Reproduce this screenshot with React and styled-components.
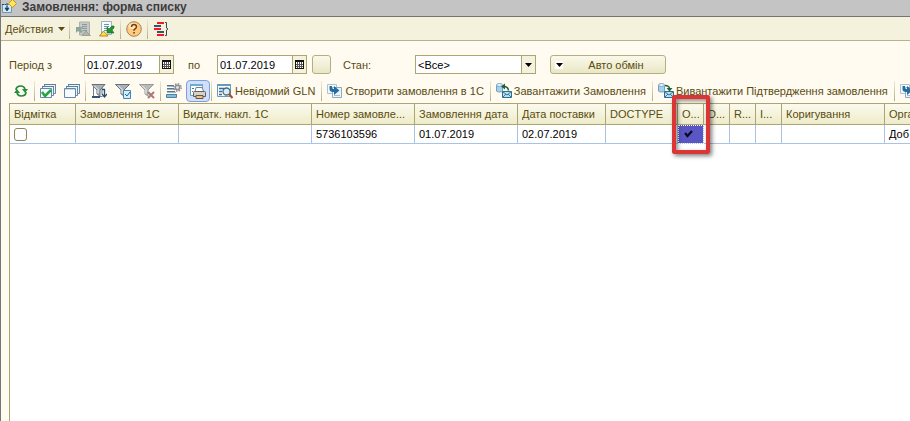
import React from "react";
import styled, { createGlobalStyle, css } from "styled-components";

const Global = createGlobalStyle`
  *, *::before, *::after { box-sizing: border-box; }
  body { margin: 0; font: 11px/16px "Liberation Sans", Arial, sans-serif; color: #5a4b10; }
  button, input, select { font: inherit; color: inherit; margin: 0; }
  svg { display: block; flex: none; }
`;

const Page = styled.div`
  display: flex;
  flex-direction: column;
  min-height: 100vh;
  overflow: hidden;
  background: #fffbf0;
  border-left: 1px solid #767676;
`;

const TitleBar = styled.header`
  display: flex;
  align-items: center;
  gap: 5px;
  height: 17px;
  padding-bottom: 3px;
  background: #c4c4c4;
  border-bottom: 1px solid #747474;
  overflow: hidden;
  white-space: nowrap;
`;

const Title = styled.h1`
  margin: 0;
  font-size: 12px;
  line-height: 16px;
  color: #3c3c3c;
`;

const MainBar = styled.nav`
  display: flex;
  align-items: center;
  height: 24px;
  padding-left: 4px;
  background: #f4f2dc;
  border-bottom: 1px solid #b9b385;
`;

const Filters = styled.section`
  display: flex;
  align-items: center;
  padding: 14px 0 0 8px;
  white-space: nowrap;
`;

const ToolRow = styled.nav`
  display: flex;
  align-items: center;
  height: 22px;
  margin-top: 6px;
  padding-left: 8px;
  white-space: nowrap;
`;

const Tool = styled.button`
  display: flex;
  flex: none;
  align-items: center;
  justify-content: center;
  gap: 2px;
  width: 24px;
  height: 22px;
  padding: 0;
  border: 1px solid transparent;
  border-radius: 4px;
  background: none;
  white-space: nowrap;
  ${(p) => p.$text && css`
    width: auto;
    padding: 0 4px 0 3px;
  `}
  ${(p) => p.$active && css`
    border-color: #7f9fdc;
    background: #cfdffc;
  `}
`;

const MenuButton = styled(Tool)`
  width: auto;
  gap: 5px;
  margin-right: 3px;
  border: 0;
`;

const Divider = styled.span`
  flex: none;
  width: 1px;
  height: 20px;
  margin: 0 1px;
  background: linear-gradient(#eeeada, #b3ae86);
`;

const Label = styled.label`
  flex: none;
  width: ${(p) => p.$w}px;
`;

const Spacer = styled.span`
  flex: none;
  width: 12px;
`;

const Field = styled.div`
  display: flex;
  flex: none;
  width: ${(p) => p.$w}px;
  height: 19px;
  margin-right: ${(p) => p.$after || 0}px;
  border: 1px solid #aca571;
  background: #fff;
  color: #000;
`;

const fieldText = css`
  flex: 1;
  min-width: 0;
  height: 17px;
  padding: 0 2px;
  border: 0;
  background: none;
  outline: none;
  appearance: none;
`;
const Input = styled.input`${fieldText}`;
const Select = styled.select`${fieldText}`;

const FieldButton = styled.button`
  display: flex;
  align-items: center;
  justify-content: center;
  width: 14px;
  padding: 0;
  border: 0;
  border-left: 1px solid #aca571;
  background: #f4f2dc;
`;

const PushButton = styled.button`
  display: flex;
  flex: none;
  align-items: center;
  width: ${(p) => p.$w}px;
  height: 19px;
  padding: 0 4px;
  border: 1px solid #b5af80;
  border-radius: 3px;
  background: linear-gradient(#fbf9ea, #e9e7c6);
`;

const PushText = styled.span`
  flex: 1;
  padding-left: 8px;
  text-align: center;
`;

const Marker = styled.span`
  display: flex;
  align-items: center;
  justify-content: center;
  width: 8px;
  height: 8px;
  background: #fff;
`;

const Grid = styled.main`
  flex: 1;
  margin: 1px 0 0 8px;
  border: solid #aca571;
  border-width: 1px 0 0 1px;
  background: #fff;
`;

const Table = styled.table`
  width: 100%;
  table-layout: fixed;
  border-collapse: separate;
  border-spacing: 0;
`;

const Col = styled.col`
  width: ${(p) => (p.$w ? `${p.$w}px` : "auto")};
`;

const Th = styled.th`
  position: relative;
  height: 21px;
  padding: 0 0 0 4px;
  border: solid #aca571;
  border-width: 0 1px 1px 0;
  background: linear-gradient(#fbfaee, #eeecc9);
  font-weight: normal;
  text-align: left;
  &:last-child { border-right: 0; }
`;

const Td = styled.td`
  height: 19px;
  padding: 0 0 0 4px;
  border: solid #a9c3e6;
  border-width: 0 1px 1px 0;
  color: #000;
  overflow: hidden;
  white-space: nowrap;
  &:last-child { border-right: 0; }
`;

const Chosen = styled(Td)`
  padding: 0 0 0 6px;
  background: #5a57c4;
  outline: 1px dotted #fff;
  outline-offset: -1px;
`;

const HeadText = styled.span`
  display: block;
  overflow: hidden;
  white-space: nowrap;
`;

const Check = styled.input`
  appearance: none;
  display: block;
  width: 13px;
  height: 13px;
  margin: 0;
  border: 1px solid #8d8558;
  border-radius: 3px;
  background: #fff;
`;

const Highlight = styled.span`
  position: absolute;
  z-index: 2;
  top: -9px;
  left: -6px;
  width: 38px;
  height: 59px;
  border: 4px solid #dc3535;
  border-radius: 2px;
  box-shadow: 2px 2px 4px rgba(0, 0, 0, 0.5), inset 2px 2px 4px rgba(0, 0, 0, 0.45);
  pointer-events: none;
`;

const Svg = ({ children }) => (
  <svg width="16" height="16" viewBox="0 0 16 16" fill="none" aria-hidden="true">{children}</svg>
);

const Arrow = ({ color = "#000" }) => (
  <svg width="7" height="4" viewBox="0 0 7 4" aria-hidden="true"><path d="M0 0h7L3.500 4z" fill={color} /></svg>
);

const ListIcon = () => (
  <Svg>
    <path d="M1.500 5.500h9v8h-9z" fill="#d5e7f3" stroke="#6a9abb" />
    <path d="M1 5.500h4M6 4v4" stroke="#234e70" strokeDasharray="2 1" />
    <path d="M6 6v3M4 9h4l-2 3z" fill="#16405f" stroke="#16405f" strokeWidth=".8" />
    <path d="M11.500 .5 15.500 4.500l-4 4-4-4z" fill="#ffe45c" stroke="#c69a18" />
  </Svg>
);

const Import = ({ off }) => (
  <Svg>
    <path d={off ? "M4.500 1h10v13h-10z" : "M2.500 .5h10v13h-10z"} fill={off ? "#c5c9c8" : "#f8fbfd"} stroke={off ? "#aab1b1" : "#96b3c8"} />
    <path d={off ? "M7 3.500h5M7 5.500h5M7 7.500h5M8 9.500h4" : "M5 3.500h5M5 5.500h5M5 7.500h4M5 9.500h3"} stroke={off ? "#8c999a" : "#6c93b1"} />
    {off ? (
      <><path d="M1 6h7L6 8l2 3-2 1-3-2-2 2z" fill="#8ba79b" /><path d="m7 14.500 4-4.500 4.500 4.500z" fill="#b5b3a8" stroke="#a19f97" /></>
    ) : (
      <><path d="M15 5v2l-2 2 2 3H8V6l2 2 3-3z" fill="#23952c" stroke="#0d6c18" strokeWidth=".6" /><path d="m.5 15 4-5 4.500 5z" fill="#ffdb54" stroke="#b98b17" /></>
    )}
  </Svg>
);

const Help = () => (
  <Svg>
    <circle cx="8" cy="8" r="7.300" fill="#ffca7d" stroke="#a98158" />
    <ellipse cx="7" cy="5" rx="4.500" ry="3" fill="#ffe7b9" />
    <path d="M5.500 6q0-2.500 2.500-2.500T10.500 6Q10.500 7 8 8.800v1" stroke="#763f1c" strokeWidth="1.500" />
    <path d="M7.200 11h1.600v1.600H7.200z" fill="#763f1c" />
  </Svg>
);

const Structure = () => (
  <Svg>
    <path d="M4 2h7M1 8h7M4 14h7" stroke="#ed1c24" strokeWidth="2" />
    <path d="M1 5h7M4 11h7" stroke="#31566f" strokeWidth="2" />
    <path d="M12 1.500h1.500V7L15 8l-1.500 1v5.500H12" stroke="#34495c" />
  </Svg>
);

const Refresh = () => (
  <Svg>
    <path d="M3 7q0-4 5-4 3 0 4 3M13 9q0 4-5 4-3 0-4-3" stroke="#238a35" strokeWidth="1.700" />
    <path d="M9 6h6l-3 4zM1 10l3-4 3 4z" fill="#23903a" />
  </Svg>
);

const Windows = ({ checked }) => (
  <Svg>
    <path d="M4.500 1.500h11v9h-11z" fill="#edf4f9" stroke="#6589a5" />
    <path d="M4 1.500h12" stroke="#55809f" />
    <path d="M2.500 3.500h11v9h-11z" fill="#edf4f9" stroke="#6589a5" />
    <path d="M2 3.500h12" stroke="#55809f" />
    <path d="M.5 5.500h11v9H.5z" fill="#f7fbff" stroke="#6589a5" />
    {checked ? <path d="m2 9 3 4 6-6" stroke="#25a53b" strokeWidth="2.500" /> : <path d="M1 6.500h10" stroke="#c5d9e6" />}
  </Svg>
);

const Funnel = ({ kind }) => (
  <Svg>
    {kind === "set" && <path d="M2.500 2v11.500h9M11 3v8" fill="#fff" stroke="#66839a" />}
    <path d={kind === "set" ? "M1 1.500h13L9 7v6l-3-2V7z" : "M.5 1.500h14L9 7v6l-3-2V7z"} fill={kind === "off" ? "#b9b9b6" : "#aab2b8"} stroke={kind === "off" ? "#999" : "#66717b"} />
    <path d="m3 2.500 4 4v4" stroke="#f4f6f7" />
    {kind === "set" && <><path d="M11 6.500h3M13.500 6v8M11 11l2.500 3 2.500-3" stroke="#294c69" strokeWidth="1.300" /><path d="M1 14h8" stroke="#305673" strokeWidth="2" /></>}
    {kind === "value" && <><path d="M8.500 7.500h7v8h-7z" fill="#d7ecfa" stroke="#4388b3" /><path d="m10 11 2 2 3-4" stroke="#17679a" /></>}
    {kind === "off" && <path d="m9 9 6 6m0-6-6 6" stroke="#a67a78" strokeWidth="2" />}
  </Svg>
);

const Settings = () => (
  <Svg>
    <path d="M1 2.500h7M1 5.500h7M1 8.500h8M1 11.500h10" stroke="#557890" />
    <path d="M1 3.500h7M1 6.500h7M1 9.500h9" stroke="#9fb9c9" />
    <path d="M.5 11.500h10v3H.5z" fill="#83bcde" stroke="#54809f" />
    <circle cx="11.500" cy="4.500" r="3.600" stroke="#909191" strokeWidth="1.600" strokeDasharray="1.500 1.300" />
    <circle cx="11.500" cy="4.500" r="2.200" fill="#e7e7e7" stroke="#8d8d91" strokeWidth="1.500" />
  </Svg>
);

const Printer = () => (
  <Svg>
    <path d="M.5 1.500h12v11H.5z" fill="#fff" stroke="#6d9fc2" />
    <path d="M0 2h13" stroke="#6daad4" strokeWidth="2" />
    <path d="M2 5.500h2M2 8.500h1" stroke="#427c9e" />
    <path d="M6 4.500h6l2 4.500H5z" fill="#fff" stroke="#788187" />
    <path d="M3.500 9.500q0-1 1-1h10q1 0 1 1v4h-12z" fill="#d8d1c6" stroke="#615e5b" />
    <path d="M6 12.500h7v3H6z" fill="#f2bd87" stroke="#62544c" />
  </Svg>
);

const SearchForm = () => (
  <Svg>
    <path d="M.5 1.500h13v12H.5z" fill="#f6fafd" stroke="#6f98b7" />
    <path d="M0 2h14" stroke="#659abe" strokeWidth="2" />
    <path d="M2 5.500h5M2 8.500h3M2 11.500h3" stroke="#356f95" strokeWidth="1.500" />
    <circle cx="9.500" cy="8.500" r="3.500" fill="#d7edf7" stroke="#496b7c" strokeWidth="1.300" />
    <path d="m12 11 3.500 4" stroke="#a84c2e" strokeWidth="2" />
  </Svg>
);

const Create = () => (
  <Svg>
    <path d="M.5 1.500h9v9h-9z" fill="#f5f9fc" stroke="#a9c2d5" />
    <path d="M5.500 4.500h9v10h-9z" fill="#eff6fb" stroke="#8dabc3" />
    <path d="M7 12.500h6" stroke="#a3bfd2" />
    <path d="M2.500 3v3q0 3 3.500 3h1v3l5.500-4.500L7 3v3H6Q5 6 5 5V3z" fill="#246d9e" />
  </Svg>
);

const Transfer = ({ out }) => (
  <Svg>
    <path d="M.5 2v6q0 1 3 1t3-1V2" fill="#a5cfeb" stroke="#6f9fbe" />
    <ellipse cx="3.500" cy="2" rx="3" ry="1.500" fill="#e3f2fc" stroke="#7fa9c5" />
    <path d="M6.500 8.500h9v6h-9z" fill="#b5e0f6" stroke="#2e6c91" />
    <path d="m7 9 4 3 4-3M7 14l3-3m5 3-3-3" stroke="#3e7897" />
    {out ? (
      <><path d="M7 2.500q4 0 4.500 3" stroke="#1c6338" strokeWidth="1.500" /><path d="M8.500 5h6l-3 3.500z" fill="#1c6338" /></>
    ) : (
      <><path d="M8 3.500q4 0 4.500 4" stroke="#1c6338" strokeWidth="1.500" /><path d="M9 .5v6L5 3.500z" fill="#1c6338" /></>
    )}
  </Svg>
);

const CalendarIcon = () => (
  <svg width="9" height="9" viewBox="0 0 9 9" shapeRendering="crispEdges" aria-hidden="true">
    <path d="M0 0h9v9H0z" fill="#fff" />
    <path d="M0 0h9v2H0zM0 8h9v1H0zM0 0h1v9H0zM8 0h1v9H8z" fill="#111" />
    <path d="M1 4h7v1H1zm0 2h7v1H1zM2 2h1v6H2zm2 0h1v6H4zm2 0h1v6H6z" fill="#555" />
  </svg>
);

const Tick = () => (
  <svg width="9" height="8" viewBox="0 0 9 8" aria-hidden="true"><path d="m1 3 2.500 3L8 1" stroke="#0b0b20" strokeWidth="2.200" fill="none" /></svg>
);

const DateField = ({ id, after }) => (
  <Field $w={90} $after={after}>
    <Input id={id} defaultValue="01.07.2019" />
    <FieldButton aria-label="Календар"><CalendarIcon /></FieldButton>
  </Field>
);

const columns = [
  { name: "Відмітка", w: 66, kind: "check" },
  { name: "Замовлення 1С", w: 103 },
  { name: "Видатк. накл. 1С", w: 133 },
  { name: "Номер замовле...", w: 103, value: "5736103596" },
  { name: "Замовлення дата", w: 103, value: "01.07.2019" },
  { name: "Дата поставки", w: 88, value: "02.07.2019" },
  { name: "DOCTYPE", w: 72 },
  { name: "O...", w: 26, kind: "chosen" },
  { name: "D...", w: 26 },
  { name: "R...", w: 26 },
  { name: "I...", w: 26 },
  { name: "Коригування", w: 103 },
  { name: "Орга", value: "Доб" },
];

const bodyCell = ({ name, kind, value }) => {
  if (kind === "check") return <Td key={name}><Check type="checkbox" aria-label={name} /></Td>;
  if (kind === "chosen") return <Chosen key={name}><Tick /></Chosen>;
  return <Td key={name}>{value}</Td>;
};

export default function App() {
  return (
    <Page>
      <Global />
      <TitleBar><ListIcon /><Title>Замовлення: форма списку</Title></TitleBar>
      <MainBar>
        <MenuButton>Действия <Arrow color="#5a4b10" /></MenuButton>
        <Divider />
        <Tool aria-label="Вивантажити"><Import off /></Tool>
        <Tool aria-label="Завантажити"><Import /></Tool>
        <Divider />
        <Tool aria-label="Довідка"><Help /></Tool>
        <Divider />
        <Tool aria-label="Структура"><Structure /></Tool>
      </MainBar>
      <Filters>
        <Label $w={75} htmlFor="from">Період з</Label>
        <DateField id="from" after={14} />
        <Label $w={29} htmlFor="to">по</Label>
        <DateField id="to" after={5} />
        <PushButton $w={19} aria-label="Вибрати період" />
        <Spacer />
        <Label $w={72} htmlFor="state">Стан:</Label>
        <Field $w={121} $after={14}>
          <Select id="state"><option>&lt;Все&gt;</option></Select>
          <FieldButton aria-label="Відкрити список"><Arrow /></FieldButton>
        </Field>
        <PushButton $w={116}><Marker><Arrow /></Marker><PushText>Авто обмін</PushText></PushButton>
      </Filters>
      <ToolRow>
        <Tool aria-label="Оновити"><Refresh /></Tool>
        <Divider />
        <Tool aria-label="Відмітити всі"><Windows checked /></Tool>
        <Tool aria-label="Зняти відмітки"><Windows /></Tool>
        <Divider />
        <Tool aria-label="Налаштувати відбір"><Funnel kind="set" /></Tool>
        <Tool aria-label="Відбір за значенням"><Funnel kind="value" /></Tool>
        <Tool aria-label="Вимкнути відбір"><Funnel kind="off" /></Tool>
        <Divider />
        <Tool aria-label="Налаштування"><Settings /></Tool>
        <Tool $active aria-label="Друк"><Printer /></Tool>
        <Divider />
        <Tool $text><SearchForm />Невідомий GLN</Tool>
        <Divider />
        <Tool $text><Create />Створити замовлення в 1С</Tool>
        <Divider />
        <Tool $text><Transfer />Завантажити Замовлення</Tool>
        <Divider />
        <Tool $text><Transfer out />Вивантажити Підтвердження замовлення</Tool>
        <Divider />
        <Tool $text aria-label="Створити документ"><Create /></Tool>
      </ToolRow>
      <Grid>
        <Table>
          <colgroup>{columns.map(({ name, w }) => <Col key={name} $w={w} />)}</colgroup>
          <thead>
            <tr>
              {columns.map(({ name, kind }) => (
                <Th key={name}>
                  <HeadText>{name}</HeadText>
                  {kind === "chosen" && <Highlight />}
                </Th>
              ))}
            </tr>
          </thead>
          <tbody><tr>{columns.map(bodyCell)}</tr></tbody>
        </Table>
      </Grid>
    </Page>
  );
}
